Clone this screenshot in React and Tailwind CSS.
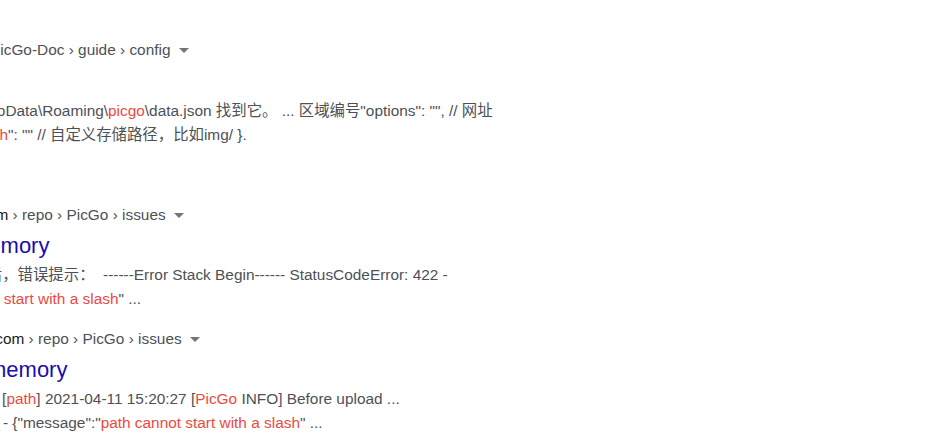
import React from 'react'

const red = 'text-[#ec4a3f]'

function Caret() {
  return (
    <svg width="10" height="5" viewBox="0 0 10 5" className="ml-2 inline-block align-middle">
      <path d="M0 0h10L5 5z" fill="#70757a" />
    </svg>
  )
}

function Crumb({ domain, path, shift }) {
  return (
    <div className={`whitespace-nowrap text-[15.4px] leading-6 ${shift}`}>
      {domain && <span className="text-[#202124]">{domain}</span>}
      <span className="text-[#4d5156]">{path}</span>
      <Caret />
    </div>
  )
}

function Title({ children, shift }) {
  return <h3 className={`whitespace-nowrap text-[22px] leading-7 text-[#1a0dab] ${shift}`}>{children}</h3>
}

function Line({ children, shift }) {
  return <div className={`whitespace-nowrap text-[15.4px] leading-6 text-[#4d5156] ${shift}`}>{children}</div>
}

export default function App() {
  return (
    <div className="h-[436px] w-[931px] overflow-hidden bg-white font-['Liberation_Sans','Noto_Sans_CJK_SC',sans-serif]">
      {/* tail of the result above */}
      <Line shift="-mt-[20px] -ml-[12px]">
        the setting for <span className={red}>picgo</span> config file
      </Line>

      {/* result 1 */}
      <div className="mt-[34px]">
        <Crumb path="PicGo-Doc › guide › config" shift="-ml-[10px]" />
        <div className="mt-[5px] h-7" />
        <div className="mt-[4px]">
          <Line shift="-ml-[22px]">
            AppData\Roaming\<span className={red}>picgo</span>\data.json 找到它。 ... 区域编号"options": "", // 网址
          </Line>
          <Line shift="-ml-[22px]">
            <span className={red}>path</span>": "" // 自定义存储路径，比如img/ }.
          </Line>
        </div>
      </div>

      {/* result 2 */}
      <div className="mt-[56px]">
        <Crumb domain="github.com" path=" › repo › PicGo › issues" shift="-ml-[67px]" />
        <Title shift="mt-[5px] -ml-[30px]">memory</Title>
        <div className="mt-[3px]">
          <Line shift="-ml-[44px]">上传后，错误提示：{'\u00a0'} ------Error Stack Begin------ StatusCodeError: 422 -</Line>
          <Line shift="-ml-[164px]">
            "message":"<span className={red}>path cannot start with a slash</span>" ...
          </Line>
        </div>
      </div>

      {/* result 3 */}
      <div className="mt-[16px]">
        <Crumb domain="github.com" path=" › repo › PicGo › issues" shift="-ml-[51px]" />
        <Title shift="mt-[5px] -ml-[12px]">memory</Title>
        <div className="mt-[3px]">
          <Line shift="-ml-[15px]">
            ... [<span className={red}>path</span>] 2021-04-11 15:20:27 [<span className={red}>PicGo</span> INFO] Before upload ...
          </Line>
          <Line shift="-ml-[27px]">
            422 - {'{'}"message":"<span className={red}>path cannot start with a slash</span>" ...
          </Line>
        </div>
      </div>
    </div>
  )
}
